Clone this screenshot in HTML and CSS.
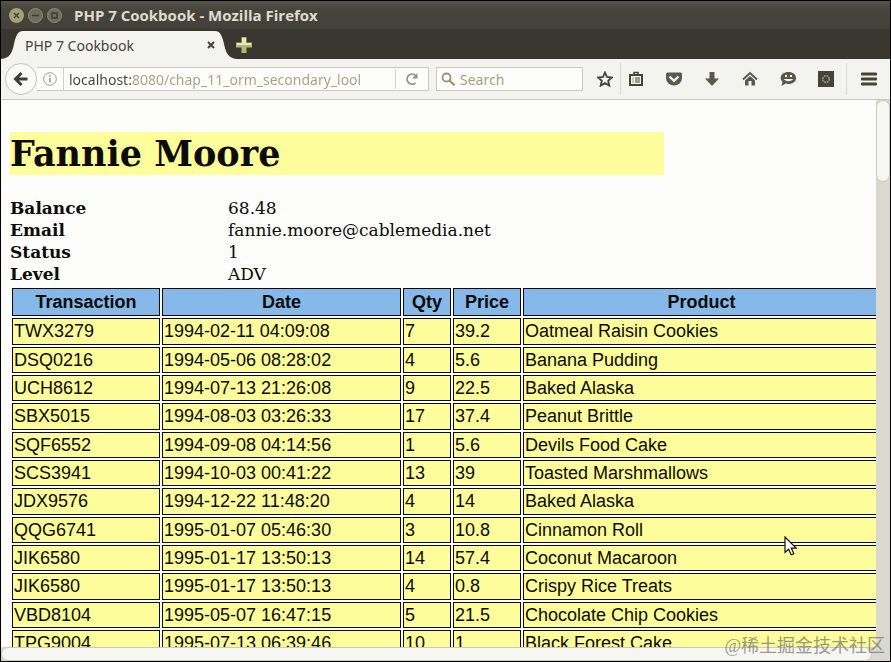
FILE: index.html
```html
<!DOCTYPE html>
<html lang="en">
<head>
  <meta charset="UTF-8" />
  <meta name="viewport" content="width=device-width, initial-scale=1.0"/>
  <title>PHP 7 Cookbook</title>
  <link rel="stylesheet" href="styles.css">
</head>
<body>

<div class="window">
  <header class="titlebar">
    <button class="win-btn close" aria-label="Close">
      <svg viewBox="0 0 15 15"><circle cx="7.5" cy="7.5" r="7.5" fill="#a3a276"/><path d="M5 5l5 5M10 5l-5 5" stroke="#3c3b35" stroke-width="1.300"/></svg>
    </button>
    <button class="win-btn" aria-label="Minimize">
      <svg viewBox="0 0 15 15"><circle cx="7.5" cy="7.5" r="7" fill="#6f6e5b" stroke="#8d8c74"/><path d="M4 7.5h7" stroke="#3c3b35" stroke-width="1.6"/></svg>
    </button>
    <button class="win-btn" aria-label="Maximize">
      <svg viewBox="0 0 15 15"><circle cx="7.5" cy="7.5" r="7" fill="#6f6e5b" stroke="#8d8c74"/><path d="M5 5h5v5H5z" fill="none" stroke="#3c3b35" stroke-width="1.4"/></svg>
    </button>
    <span class="win-title">PHP 7 Cookbook - Mozilla Firefox</span>
  </header>

  <div class="tabstrip">
    <svg class="tab-edge" viewBox="0 0 22 28"><path d="M0 28C9 27 11 22 13 13C15 4 17 0 22 0V28z" fill="#f3f3ef"/></svg>
    <div class="tab">
      <span class="tab-title">PHP 7 Cookbook</span>
      <button class="tab-close" aria-label="Close tab">
        <svg viewBox="0 0 8 8"><path d="M1 1l6 6M7 1L1 7" stroke="#45443b" stroke-width="2"/></svg>
      </button>
    </div>
    <svg class="tab-edge" viewBox="0 0 22 28"><path d="M22 28C13 27 11 22 9 13C7 4 5 0 0 0V28z" fill="#f3f3ef"/></svg>
    <button class="new-tab" aria-label="New tab">
      <svg viewBox="0 0 16 16"><path d="M5.500 0h5v5.500H16v5h-5.500V16h-5v-5.500H0v-5h5.500z" fill="#b5b47c"/><path d="M6 1h4v5h5v2H1V6h5z" fill="#ecebae"/></svg>
    </button>
  </div>

  <nav class="navbar">
    <button class="back" aria-label="Back">
      <svg viewBox="0 0 16 16"><path d="M8.500 2L2.500 8l6 6M3 8h11.500" fill="none" stroke="#3f3e36" stroke-width="3"/></svg>
    </button>
    <div class="urlbox">
      <svg class="info" viewBox="0 0 14 14"><circle cx="7" cy="7" r="6.300" fill="none" stroke="#9a998a"/><path d="M7 6v4.500M7 3.300v1.500" stroke="#87867a" stroke-width="1.400"/></svg>
      <input class="url" type="text" aria-label="Address" value="localhost:8080/chap_11_orm_secondary_lool">
      <button class="reload" aria-label="Reload">
        <svg viewBox="0 0 14 14"><path d="M10.500 10.800A5 5 0 1 1 10.500 3.500" fill="none" stroke="#8f9388" stroke-width="1.800"/><path d="M12.500 1v5.500H7z" fill="#8f9388"/></svg>
      </button>
    </div>
    <div class="searchbox">
      <svg class="glass" viewBox="0 0 14 14"><circle cx="5.500" cy="5.500" r="4" fill="none" stroke="#96956c" stroke-width="1.800"/><path d="M8.500 8.500l5 4.800" stroke="#96956c" stroke-width="2.200"/></svg>
      <input class="search" type="text" aria-label="Search" placeholder="Search">
    </div>
    <button class="tool star" aria-label="Bookmark this page">
      <svg viewBox="0 0 16 16"><path d="M8 1.500l2 4.500 4.900.5-3.700 3.300 1.100 4.800L8 12.100l-4.300 2.500 1.100-4.800L1.100 6.500 6 6z" fill="none" stroke="#45443b" stroke-width="1.800"/></svg>
    </button>
    <button class="tool library" aria-label="Show your bookmarks">
      <svg viewBox="0 0 16 16"><path d="M2 4h12v10H2z" fill="none" stroke="#45443b" stroke-width="2"/><path d="M6 4V1.500h4V4" fill="none" stroke="#45443b" stroke-width="1.600"/><path d="M4.500 7h1M7 7h5M4.500 9h1M7 9h5M4.500 11h1M7 11h5" stroke="#45443b" stroke-width="1"/></svg>
    </button>
    <button class="tool" aria-label="Save to Pocket">
      <svg viewBox="0 0 16 16"><path d="M1.500 1.500h13q1.500 0 1.500 1.500v4a8 7.500 0 0 1-16 0V3q0-1.500 1.500-1.500z" fill="#5b5a4e"/><path d="M3.500 5.500L8 9.800l4.500-4.300" fill="none" stroke="#f3f3ef" stroke-width="2.300"/></svg>
    </button>
    <button class="tool" aria-label="Downloads">
      <svg viewBox="0 0 16 16"><path d="M5.500 1h5v6.500H15L8 15 1 7.500h4.500z" fill="#59584c"/></svg>
    </button>
    <button class="tool" aria-label="Home">
      <svg viewBox="0 0 16 16"><path d="M1 8.500L8 2l7 6.500" fill="none" stroke="#59584c" stroke-width="2"/><path d="M3 9.500l5-4.500 5 4.500v5H9.500V10h-3v4.500H3z" fill="#59584c"/></svg>
    </button>
    <button class="tool" aria-label="Start a conversation">
      <svg viewBox="0 0 16 16"><path d="M8.500 1C13 1 16 3.500 16 7s-3 6-7.500 6c-1 0-2-.1-2.800-.4L1.500 15l1-4.200C1.200 9.800.7 8.500.7 7c0-3.500 3.300-6 7.800-6z" fill="#59584c"/><path d="M5 5h2M10 5h2" stroke="#f3f3ef" stroke-width="1.800"/><path d="M3.500 8h10q-5 4.500-10 0z" fill="#f3f3ef"/></svg>
    </button>
    <button class="tool" aria-label="Add-on settings">
      <svg viewBox="0 0 16 16"><path d="M0 0h16v16H0z" fill="#45443b"/><circle cx="8" cy="8" r="3.300" fill="none" stroke="#a3a27d" stroke-width="1.600" stroke-dasharray="1.700 .9"/></svg>
    </button>
    <button class="tool menu" aria-label="Open menu">
      <svg viewBox="0 0 16 16"><path d="M1 3h14M1 8h14M1 13h14" stroke="#45443b" stroke-width="2.800" stroke-linecap="round"/></svg>
    </button>
  </nav>

  <div class="viewport">
    <main class="page">
      <div class="content">
        <h1>Fannie Moore</h1>
        <dl class="profile">
          <dt>Balance</dt><dd>68.48</dd>
          <dt>Email</dt><dd>fannie.moore@cablemedia.net</dd>
          <dt>Status</dt><dd>1</dd>
          <dt>Level</dt><dd>ADV</dd>
        </dl>
        <table class="purchases">
          <colgroup>
            <col class="c-trans"><col class="c-date"><col class="c-qty"><col class="c-price"><col>
          </colgroup>
          <thead>
            <tr><th>Transaction</th><th>Date</th><th>Qty</th><th>Price</th><th>Product</th></tr>
          </thead>
          <tbody>
            <tr><td>TWX3279</td><td>1994-02-11 04:09:08</td><td>7</td><td>39.2</td><td>Oatmeal Raisin Cookies</td></tr>
            <tr><td>DSQ0216</td><td>1994-05-06 08:28:02</td><td>4</td><td>5.6</td><td>Banana Pudding</td></tr>
            <tr><td>UCH8612</td><td>1994-07-13 21:26:08</td><td>9</td><td>22.5</td><td>Baked Alaska</td></tr>
            <tr><td>SBX5015</td><td>1994-08-03 03:26:33</td><td>17</td><td>37.4</td><td>Peanut Brittle</td></tr>
            <tr><td>SQF6552</td><td>1994-09-08 04:14:56</td><td>1</td><td>5.6</td><td>Devils Food Cake</td></tr>
            <tr><td>SCS3941</td><td>1994-10-03 00:41:22</td><td>13</td><td>39</td><td>Toasted Marshmallows</td></tr>
            <tr><td>JDX9576</td><td>1994-12-22 11:48:20</td><td>4</td><td>14</td><td>Baked Alaska</td></tr>
            <tr><td>QQG6741</td><td>1995-01-07 05:46:30</td><td>3</td><td>10.8</td><td>Cinnamon Roll</td></tr>
            <tr><td>JIK6580</td><td>1995-01-17 13:50:13</td><td>14</td><td>57.4</td><td>Coconut Macaroon</td></tr>
            <tr><td>JIK6580</td><td>1995-01-17 13:50:13</td><td>4</td><td>0.8</td><td>Crispy Rice Treats</td></tr>
            <tr><td>VBD8104</td><td>1995-05-07 16:47:15</td><td>5</td><td>21.5</td><td>Chocolate Chip Cookies</td></tr>
            <tr><td>TPG9004</td><td>1995-07-13 06:39:46</td><td>10</td><td>1</td><td>Black Forest Cake</td></tr>
          </tbody>
        </table>
      </div>
    </main>
    <div class="vscroll"><div class="vthumb"></div></div>
  </div>
  <div class="hscroll"><div class="hthumb"></div></div>

  <svg class="pointer" viewBox="0 0 13 20"><path d="M1 1v15.500l3.600-3.300 2.600 5.600 2.600-1.200-2.500-5.500h4.900z" fill="#fff" stroke="#111" stroke-width="1.200"/></svg>
  <div class="watermark">@稀土掘金技术社区</div>
</div>

</body>
</html>
```
FILE: styles.css
```css
* {
  box-sizing: border-box;
}
body {
  margin: 0;
  background: #fdfdfc;
  font-family: "Noto Sans", sans-serif;
  font-size: 14px;
}
button {
  padding: 0;
  border: none;
  background: none;
  display: flex;
  align-items: center;
  justify-content: center;
  cursor: pointer;
}
.window {
  position: relative;
  display: flex;
  flex-direction: column;
  height: 100vh;
  border: 1px solid #000;
  overflow: hidden;
}

/* title bar */
.titlebar {
  display: flex;
  align-items: center;
  gap: 4px;
  height: 28px;
  padding-left: 8px;
  background: linear-gradient(#55544a, #47453c 30%, #42413a);
}
.win-btn, .win-btn svg {
  width: 15px;
  height: 15px;
}
.win-title {
  margin-left: 8px;
  color: #dfdbd0;
  font-family: "Open Sans", sans-serif;
  font-size: 15px;
  font-weight: bold;
  white-space: nowrap;
}

/* tabs */
.tabstrip {
  display: flex;
  align-items: flex-end;
  height: 30px;
  background: #38362f;
}
.tab-edge {
  width: 22px;
  height: 28px;
}
.tab {
  display: flex;
  align-items: center;
  justify-content: space-between;
  width: 192px;
  height: 28px;
  background: #f3f3ef;
}
.tab-title {
  margin-left: 2px;
  color: #45443b;
}
.tab-close {
  width: 8px;
  height: 8px;
}
.tab-close svg {
  width: 8px;
  height: 8px;
}
.new-tab {
  width: 16px;
  height: 28px;
  margin-left: -1px;
}
.new-tab svg {
  width: 16px;
  height: 16px;
}

/* toolbar */
.navbar {
  display: flex;
  align-items: center;
  height: 41px;
  padding-left: 4px;
  background: #f3f3ef;
  border-bottom: 1px solid #c9c9c0;
}
.back {
  position: relative;
  width: 32px;
  height: 32px;
  border: 1px solid #c6c6ba;
  border-radius: 50%;
  background: #fafaf8;
}
.back svg {
  width: 16px;
  height: 16px;
}
.urlbox, .searchbox {
  display: flex;
  align-items: center;
  height: 24px;
  background: #fdfdfc;
  border: 1px solid #c9c9c0;
}
.urlbox {
  flex: 1;
  min-width: 0;
  border-left: none;
}
.info {
  width: 14px;
  height: 14px;
  margin: 0 6px;
}
.url, .search {
  min-width: 0;
  flex: 1;
  height: 22px;
  border: none;
  outline: none;
  font: inherit;
}
.url {
  padding: 0 0 0 5px;
  border-left: 1px solid #d2d2c8;
  margin-right: 22px;
  /* host part dark, path part lighter */
  color: transparent;
  background: linear-gradient(90deg, #45443b 69px, #a3a27d 69px);
  background-clip: text;
  -webkit-background-clip: text;
}
.reload {
  width: 33px;
  height: 20px;
  border-left: 1px solid #d2d2c8;
}
.reload svg {
  width: 14px;
  height: 14px;
}
.searchbox {
  width: 147px;
  margin: 0 7px;
  padding-left: 4px;
}
.glass {
  width: 14px;
  height: 14px;
}
.search {
  padding: 0 0 0 5px;
  background: none;
}
.search::placeholder {
  color: #a3a27d;
}
.tool {
  width: 38px;
  height: 32px;
}
.tool svg {
  width: 16px;
  height: 16px;
}
.star {
  width: 30px;
}
.library {
  width: 31px;
  margin-right: 4px;
  border-left: 1px solid #d8d8cf;
}
.menu {
  width: 44px;
  margin-left: 1px;
  border-left: 1px solid #d8d8cf;
}

/* web page */
.viewport {
  display: flex;
  flex: 1;
  min-height: 0;
}
.page {
  flex: 1;
  min-width: 0;
  overflow: hidden;
  font-family: "DejaVu Serif", serif;
  font-size: 17px;
  color: #0c0b06;
}
.content {
  width: calc(100% - 3px);
  margin-left: 9px;
  padding-top: 32px;
}
h1 {
  width: 75%;
  margin: 0 0 22px;
  background: #fdfd9b;
  font-size: 35px;
  line-height: 43px;
}
.profile {
  display: grid;
  grid-template-columns: 25% 75%;
  margin: 0 0 1px;
  line-height: 22px;
}
.profile dt {
  font-weight: bold;
}
.profile dd {
  margin: 0;
}
.purchases {
  width: 100%;
  table-layout: fixed;
  border-collapse: separate;
  border-spacing: 2px;
  font-family: "Liberation Sans", Arial, sans-serif;
  font-size: 18px;
  line-height: 22px;
}
.c-trans {
  width: 148px;
}
.c-date {
  width: 239px;
}
.c-qty {
  width: 48px;
}
.c-price {
  width: 68px;
}
.purchases th, .purchases td {
  height: 26px;
  padding: 1px;
  border: 1px solid #0c0b06;
  white-space: nowrap;
}
.purchases th {
  height: 28px;
  background: #86b8ea;
}
.purchases td {
  background: #fdfd9b;
  vertical-align: top;
}
.purchases tr:nth-child(3n+1) td {
  height: 27px;
}

/* scrollbars */
.vscroll {
  width: 14px;
  background: #d9d9cf;
}
.vthumb {
  height: 15%;
  border: 1px solid #c9c9c0;
  border-radius: 7px;
  background: #f6f6f3;
}
.hscroll {
  height: 14px;
  background: #d9d9cf;
}
.hthumb {
  width: 98%;
  height: 14px;
  border: 1px solid #c9c9c0;
  border-radius: 7px;
  background: #f6f6f3;
}

/* things lying over the page */
.pointer {
  position: absolute;
  right: 93px;
  bottom: 105px;
  width: 13px;
  height: 20px;
}
.watermark {
  position: absolute;
  right: 5px;
  bottom: 2px;
  color: rgba(110, 110, 105, 0.7);
  font-family: "Liberation Serif", "Noto Sans CJK SC", sans-serif;
  font-size: 18px;
  line-height: 26px;
  white-space: nowrap;
}
```
